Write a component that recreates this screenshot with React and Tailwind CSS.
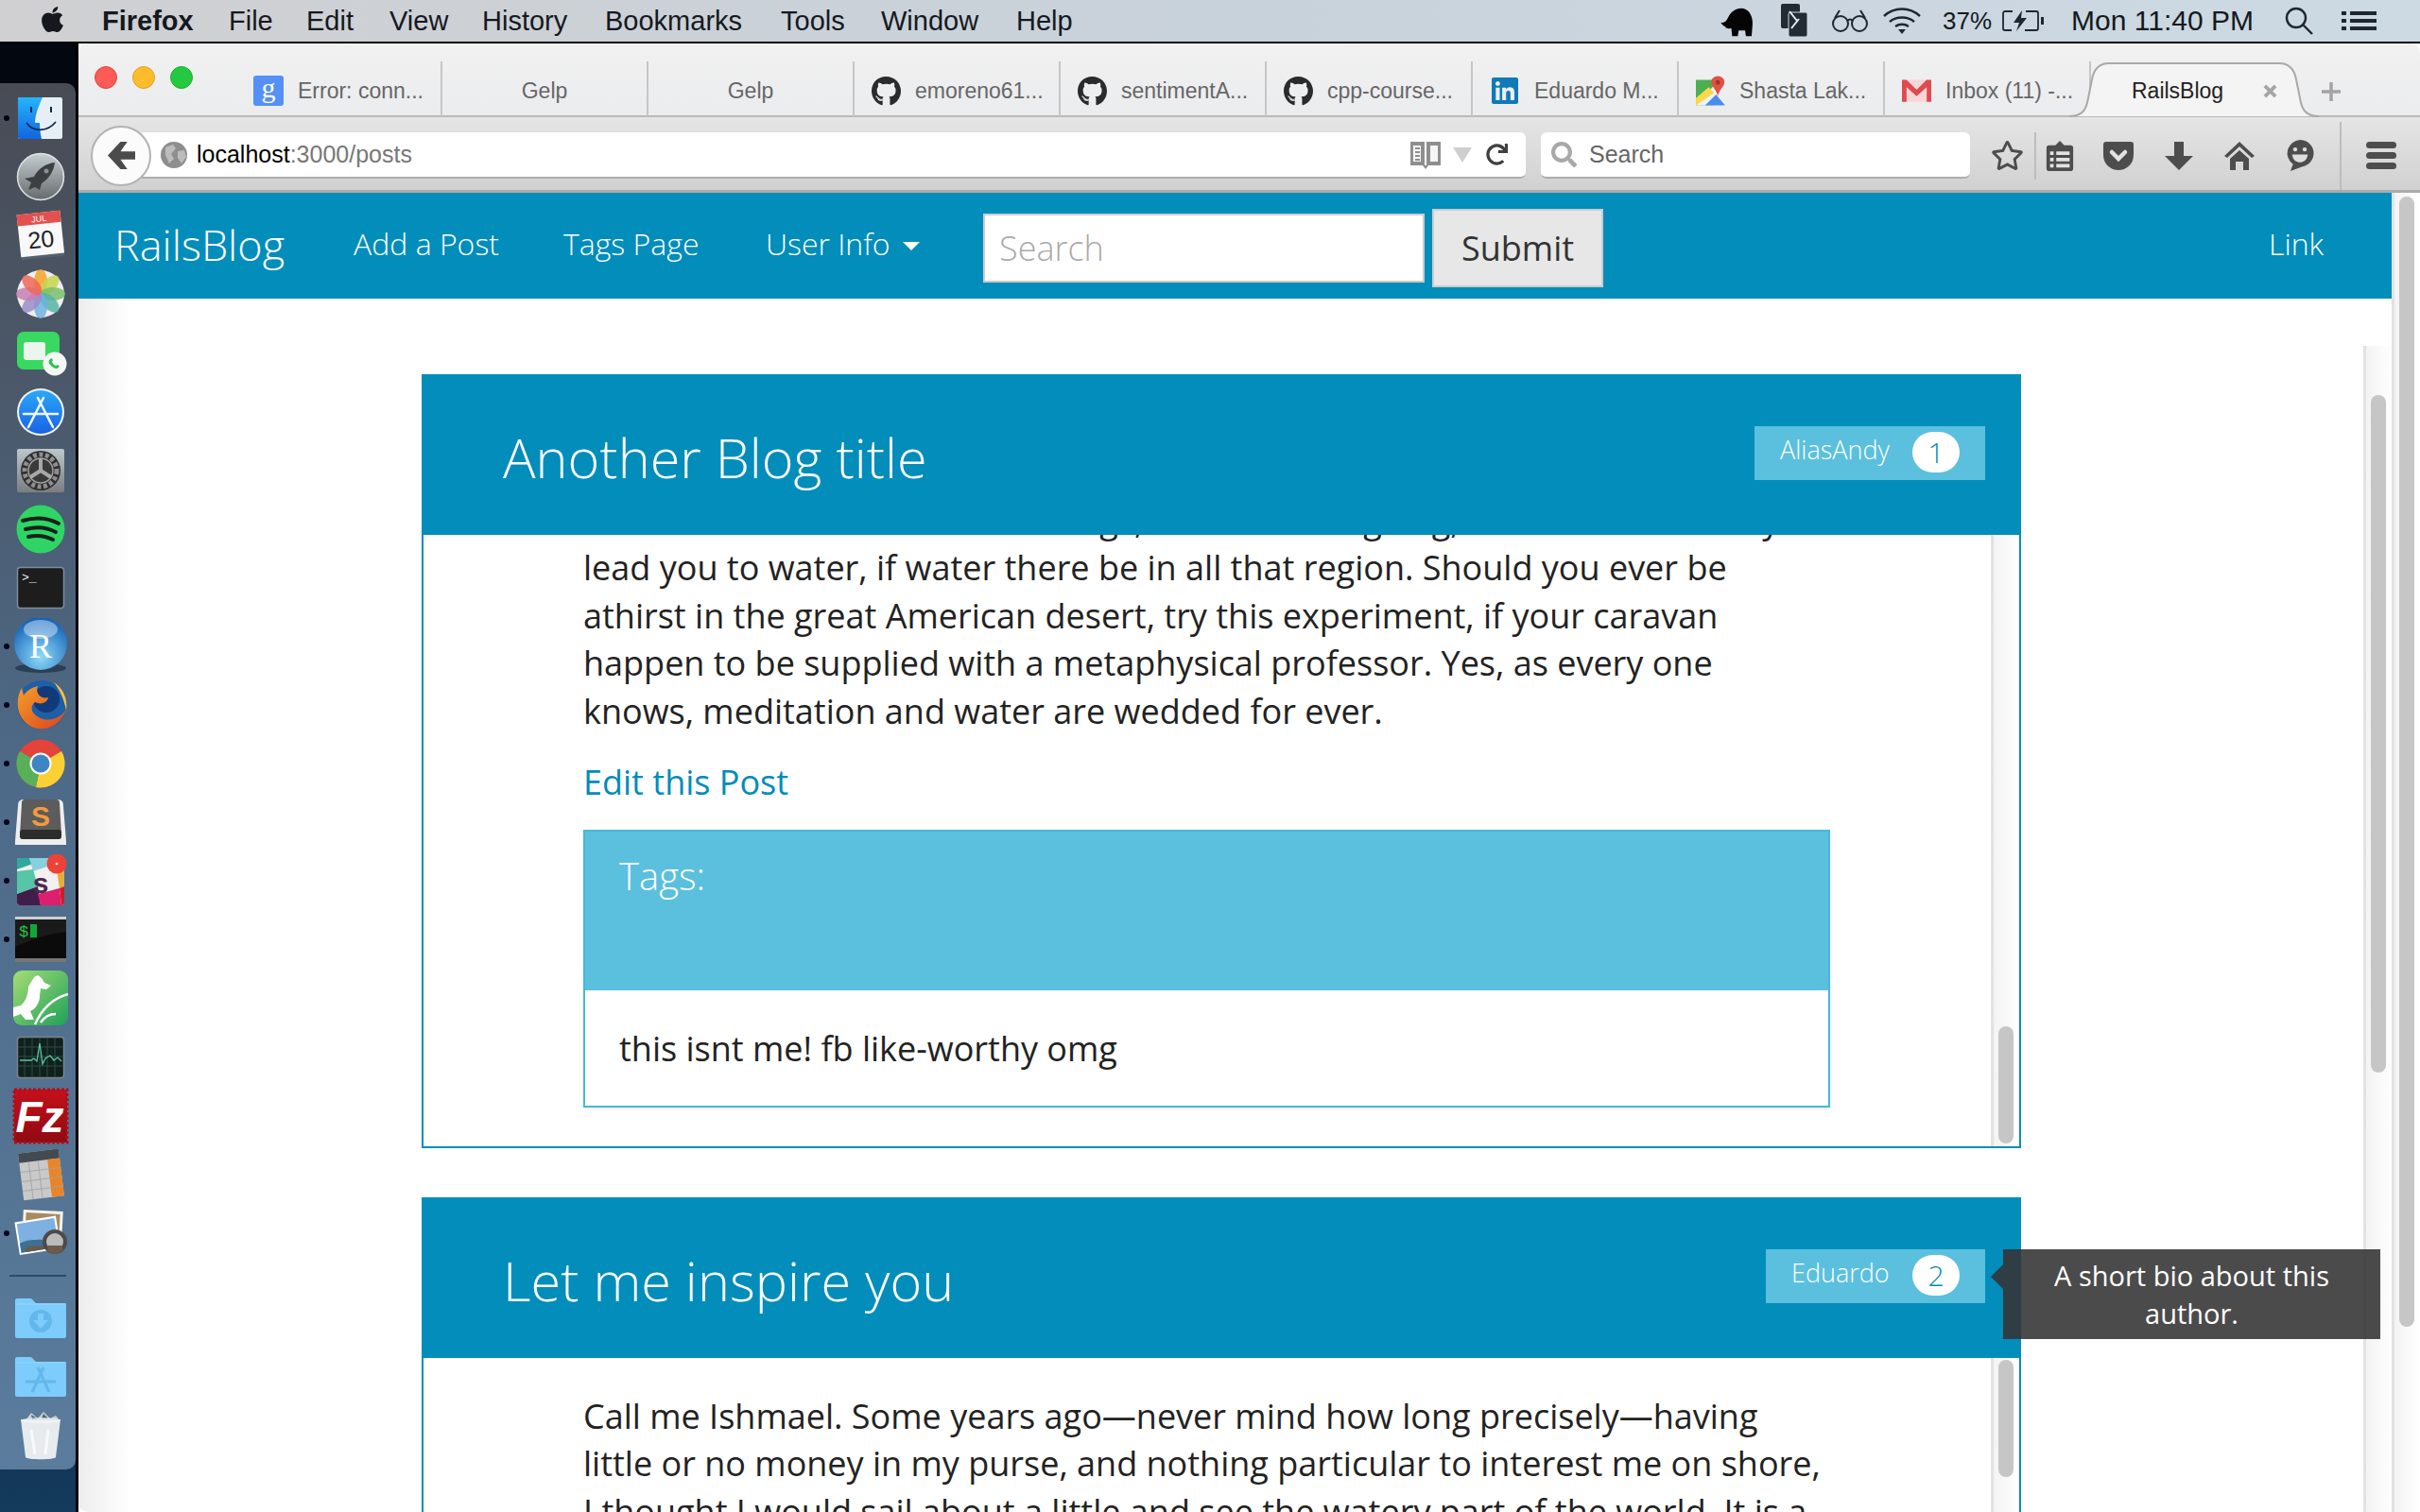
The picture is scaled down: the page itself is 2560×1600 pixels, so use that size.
import { FaApple, FaGithub, FaLinkedin, FaRedo, FaRegStar, FaSearch } from 'react-icons/fa'

const sans = "font-['Liberation_Sans',Arial,sans-serif]"

// ---- dock icons, all on a 60x60 box ----
const Finder = () => (
  <svg viewBox="0 0 60 60" className="w-[60px] h-[60px]">
    <defs>
      <linearGradient id="fin" x1="0" y1="0" x2="0" y2="1"><stop offset="0" stopColor="#25b5fb" /><stop offset="1" stopColor="#1265e0" /></linearGradient>
    </defs>
    <rect x="6" y="8" width="47" height="44" rx="2" fill="#e6eff6" />
    <path d="M8 8H32C27 19 24 28 24 35H29C29 42 30 48 31 52H8a2 2 0 0 1-2-2V10a2 2 0 0 1 2-2z" fill="url(#fin)" />
    <rect x="19" y="18" width="2" height="6" fill="#10294a" />
    <rect x="40" y="18" width="2" height="6" fill="#10294a" />
    <path d="M15 35C22 45 37 45 46 34" fill="none" stroke="#10294a" strokeWidth="1.8" />
  </svg>
)

const Launchpad = () => (
  <svg viewBox="0 0 60 60" className="w-[60px] h-[60px]">
    <defs>
      <linearGradient id="lau" x1="0" y1="0" x2="0" y2="1"><stop offset="0" stopColor="#c5ced2" /><stop offset="1" stopColor="#666a6d" /></linearGradient>
    </defs>
    <circle cx="30" cy="30" r="24.5" fill="url(#lau)" stroke="#dfe3e5" strokeWidth="1.5" />
    <path d="M45 15C35 16 27 22 23 30L13 32L20 36L17 44L24 41L29 44L31 37C39 32 44 24 45 15z" fill="#3c4043" />
    <circle cx="36" cy="24" r="2.5" fill="#8b9093" />
  </svg>
)

const Calendar = () => (
  <svg viewBox="0 0 60 60" className="w-[60px] h-[60px]">
    <g transform="rotate(-6 30 30)">
      <rect x="7" y="9" width="46" height="45" fill="#56606a" />
      <rect x="7" y="6" width="46" height="45" fill="#f8f8f8" />
      <rect x="7" y="6" width="46" height="12" fill="#e4504e" />
      <text x="30" y="15.5" textAnchor="middle" fontSize="9" fill="#fff" fontFamily="Liberation Sans">JUL</text>
      <text x="30" y="43" textAnchor="middle" fontSize="25" fill="#222" fontFamily="Liberation Sans">20</text>
    </g>
  </svg>
)

const Photos = () => {
  const colors = ['#f5a32a', '#c6d64c', '#79bf6a', '#58b3a8', '#6fb2e2', '#9a8cc9', '#c77fb3', '#ee675a']
  return (
    <svg viewBox="0 0 60 60" className="w-[60px] h-[60px]">
      <circle cx="30" cy="30" r="25" fill="#eeeeee" />
      {colors.map((c, i) => (
        <ellipse key={c} cx="30" cy="17" rx="7" ry="13" fill={c} fillOpacity="0.85" transform={`rotate(${i * 45} 30 30)`} />
      ))}
    </svg>
  )
}

const FaceTime = () => (
  <svg viewBox="0 0 60 60" className="w-[60px] h-[60px]">
    <rect x="5" y="8" width="45" height="40" rx="7" fill="#39d861" />
    <rect x="12" y="19" width="23" height="19" rx="3" fill="#eaf6ec" />
    <circle cx="45" cy="42" r="12.5" fill="#f4f7f4" />
    <path d="M40 37c1-1 2-1 3 1l-1 2c1 2 2 3 4 4l2-1c2 1 2 2 1 3-2 2-5 1-8-2s-3-5-1-7z" fill="#2fc257" />
  </svg>
)

const AppStore = () => (
  <svg viewBox="0 0 60 60" className="w-[60px] h-[60px]">
    <defs>
      <linearGradient id="aps" x1="0" y1="0" x2="0" y2="1"><stop offset="0" stopColor="#2aa8fb" /><stop offset="1" stopColor="#1a62e4" /></linearGradient>
    </defs>
    <circle cx="30" cy="30" r="25" fill="#f2f5f8" />
    <circle cx="30" cy="30" r="23" fill="url(#aps)" />
    <path d="M33 15L17 46M27 15L43 46M12 32H48" fill="none" stroke="#eef5fd" strokeWidth="2.6" strokeLinecap="round" />
  </svg>
)

const SysPrefs = () => (
  <svg viewBox="0 0 60 60" className="w-[60px] h-[60px]">
    <defs>
      <linearGradient id="sys" x1="0" y1="0" x2="0" y2="1"><stop offset="0" stopColor="#bcc7ca" /><stop offset="1" stopColor="#7a7e80" /></linearGradient>
    </defs>
    <rect x="5" y="7" width="50" height="46" rx="2" fill="url(#sys)" />
    <circle cx="30" cy="30" r="21" fill="#2e2e2e" />
    <circle cx="30" cy="30" r="17" fill="none" stroke="#8e8e8e" strokeWidth="5" strokeDasharray="4 2.5" />
    <circle cx="30" cy="30" r="13" fill="#3a3a3a" stroke="#a2a2a2" strokeWidth="1.5" />
    <path d="M30 30V17M30 30L19 37M30 30L41 37" stroke="#a8a8a8" strokeWidth="4" />
  </svg>
)

const Spotify = () => (
  <svg viewBox="0 0 60 60" className="w-[60px] h-[60px]">
    <circle cx="30" cy="30" r="25.5" fill="#2ed565" />
    <path d="M11 21C24 17 38 18 49 24M14 30C25 27 37 28 46 33M17 38C26 36 35 37 43 41" fill="none" stroke="#16221b" strokeWidth="4" strokeLinecap="round" />
  </svg>
)

const Terminal = () => (
  <svg viewBox="0 0 60 60" className="w-[60px] h-[60px]">
    <rect x="5.5" y="8.5" width="49" height="43" rx="3" fill="#1d1d1d" stroke="#7e8c99" strokeWidth="1.5" />
    <text x="10" y="23" fontSize="13" fill="#eee" fontFamily="Liberation Mono">&gt;_</text>
  </svg>
)

const RLang = () => (
  <svg viewBox="0 0 60 60" className="w-[60px] h-[60px]">
    <defs>
      <radialGradient id="rl" cx="0.5" cy="0.75" r="0.75"><stop offset="0" stopColor="#8fdcf7" /><stop offset="1" stopColor="#0f5fb8" /></radialGradient>
    </defs>
    <ellipse cx="30" cy="53" rx="27" ry="5" fill="#2a3f55" />
    <circle cx="30" cy="27" r="28" fill="url(#rl)" />
    <ellipse cx="30" cy="12" rx="18" ry="10" fill="#fff" fillOpacity="0.4" />
    <text x="30" y="42" textAnchor="middle" fontSize="36" fill="#fff" fontFamily="Liberation Serif">R</text>
  </svg>
)

const Firefox = () => (
  <svg viewBox="0 0 60 60" className="w-[60px] h-[60px]">
    <defs>
      <linearGradient id="ffx" x1="0" y1="0" x2="1" y2="1"><stop offset="0" stopColor="#f6a02a" /><stop offset="1" stopColor="#d9421c" /></linearGradient>
    </defs>
    <circle cx="31" cy="30" r="26" fill="#1d5fa8" />
    <circle cx="36" cy="24" r="14" fill="#123a7a" />
    <path d="M10 12C3 24 3 43 20 53C34 60 52 52 57 34C52 44 40 48 30 44C20 40 18 32 24 27C30 30 37 28 38 22C30 24 24 18 27 10C18 12 14 17 12 20z" fill="url(#ffx)" />
    <path d="M44 6C53 12 59 22 57 36C55 24 50 14 44 6z" fill="#f6c243" />
  </svg>
)

const Chrome = () => (
  <svg viewBox="0 0 60 60" className="w-[60px] h-[60px]">
    <circle cx="30" cy="30" r="25.5" fill="#e2433b" />
    <path d="M30 30L52 43A25.5 25.5 0 0 1 25 55z" fill="#fbd035" />
    <path d="M30 30L52 17A25.5 25.5 0 0 1 52 43L30 43z" fill="#fbd035" />
    <path d="M8 17L30 30L25 55A25.5 25.5 0 0 1 8 17z" fill="#58b159" />
    <circle cx="30" cy="30" r="11.5" fill="#fff" />
    <circle cx="30" cy="30" r="9.5" fill="#3f85c4" />
  </svg>
)

const Sublime = () => (
  <svg viewBox="0 0 60 60" className="w-[60px] h-[60px]">
    <path d="M3 50L6 13C6 8 8 6 12 6H48C52 6 54 8 54 13L57 50V54H3z" fill="#eeeeee" />
    <path d="M8 44L10 10C10 7 11 6 14 6H46C49 6 50 7 50 10L52 44C52 47 50 48 48 48H12C10 48 8 47 8 44z" fill="#5c5c5c" />
    <rect x="8" y="38" width="44" height="10" rx="3" fill="#2c2c2c" />
    <text x="30" y="34" textAnchor="middle" fontSize="30" fontWeight="700" fill="#f59a3c" fontFamily="Liberation Sans">S</text>
  </svg>
)

const Slack = () => (
  <svg viewBox="0 0 60 60" className="w-[60px] h-[60px]">
    <rect x="5" y="6" width="50" height="50" rx="3" fill="#f4f1ee" />
    <path d="M5 18L22 12L18 6H8a3 3 0 0 0-3 3z" fill="#2fa99b" />
    <path d="M18 6L22 20L46 12L44 6z" fill="#87d0e0" />
    <path d="M5 20L22 18L27 36L5 44z" fill="#56c5a8" />
    <path d="M46 12L55 10V36L50 38z" fill="#e6ad3e" />
    <path d="M5 44L27 36L30 56H8a3 3 0 0 1-3-3z" fill="#411d4a" />
    <path d="M30 56L27 44L50 38L52 56z" fill="#dd1f6d" />
    <path d="M50 38L55 36V53a3 3 0 0 1-3 3z" fill="#d31a2a" />
    <text x="30" y="43" textAnchor="middle" fontSize="30" fontWeight="700" fill="#4e2a52" fontFamily="Liberation Sans">s</text>
    <circle cx="47" cy="12" r="10.5" fill="#ef4136" />
    <circle cx="47" cy="12" r="1.3" fill="#fff" />
  </svg>
)

const ITerm = () => (
  <svg viewBox="0 0 60 60" className="w-[60px] h-[60px]">
    <rect x="3" y="6" width="54" height="48" fill="#1a1a1a" />
    <rect x="3" y="6" width="54" height="3" fill="#cfcfcf" />
    <rect x="3" y="50" width="54" height="4" fill="#777" />
    <path d="M3 38C20 30 40 24 57 22V50H3z" fill="#0b0b0b" />
    <text x="7" y="27" fontSize="17" fill="#1fcb45" fontFamily="Liberation Mono">$</text>
    <rect x="19" y="14" width="7" height="14" fill="#12a838" />
  </svg>
)

const Dragon = () => (
  <svg viewBox="0 0 60 60" className="w-[60px] h-[60px]">
    <defs>
      <linearGradient id="drg" x1="0" y1="0" x2="1" y2="1"><stop offset="0" stopColor="#a5dd75" /><stop offset="1" stopColor="#1fa159" /></linearGradient>
    </defs>
    <rect x="1" y="1" width="58" height="58" rx="9" fill="url(#drg)" />
    <path d="M23 8L27 6L31 9L34 14L41 17L36 21L30 20L29 28C29 36 24 42 19 44L23 53H14L9 47L1 50V40L9 38C14 34 17 26 17 18z" fill="#fff" />
    <path d="M59 26C44 30 32 40 24 58M30 56C34 50 40 47 46 47" fill="none" stroke="#fff" strokeWidth="2.5" />
  </svg>
)

const Activity = () => (
  <svg viewBox="0 0 60 60" className="w-[60px] h-[60px]">
    <rect x="5.5" y="8.5" width="49" height="43" rx="3" fill="#10201c" stroke="#78858c" strokeWidth="1.5" />
    <path d="M13 9V51M21 9V51M29 9V51M37 9V51M45 9V51M6 19H54M6 29H54M6 39H54" stroke="#2f4d44" strokeWidth="1" />
    <path d="M8 33H20L23 31L26 34L29 15L32 37L35 31L40 28L44 33L48 30L52 34" fill="none" stroke="#58c7a0" strokeWidth="1.3" />
  </svg>
)

const FileZilla = () => (
  <svg viewBox="0 0 60 60" className="w-[60px] h-[60px]">
    <defs>
      <linearGradient id="fz" x1="0" y1="0" x2="0" y2="1"><stop offset="0" stopColor="#c4101c" /><stop offset="1" stopColor="#8f0a12" /></linearGradient>
    </defs>
    <rect x="2" y="2" width="56" height="56" fill="url(#fz)" stroke="#b30d18" strokeWidth="3" strokeDasharray="3 2" />
    <text x="29" y="47" textAnchor="middle" fontSize="46" fontWeight="700" fontStyle="italic" fill="#fff" fontFamily="Liberation Sans">Fz</text>
  </svg>
)

const Calculator = () => (
  <svg viewBox="0 0 60 60" className="w-[60px] h-[60px]">
    <g transform="rotate(-7 30 30)">
      <rect x="9" y="5" width="43" height="50" fill="#c9c9c9" />
      <rect x="9" y="5" width="43" height="10" fill="#444b50" />
      <rect x="39" y="15" width="13" height="40" fill="#ea8428" />
      <path d="M9 25H52M9 35H52M9 45H52M19 15V55M29 15V55" stroke="#a2a2a2" strokeWidth="0.8" />
    </g>
  </svg>
)

const Preview = () => (
  <svg viewBox="0 0 60 60" className="w-[60px] h-[60px]">
    <rect x="11" y="6" width="42" height="30" fill="#f6f3ea" transform="rotate(3 32 21)" />
    <rect x="14" y="9" width="36" height="24" fill="#a88b60" transform="rotate(3 32 21)" />
    <g transform="rotate(-9 26 33)">
      <rect x="5" y="15" width="44" height="35" fill="#fff" />
      <rect x="7" y="17" width="40" height="31" fill="#7eb0e2" />
      <path d="M7 38C20 32 34 42 47 36V48H7z" fill="#3f6f93" />
      <path d="M12 44C20 40 28 46 36 44V48H12z" fill="#6a5a4a" />
    </g>
    <circle cx="45" cy="39" r="11" fill="#b8bcbc" stroke="#4d4a47" strokeWidth="4" />
    <path d="M37 48C40 53 50 53 54 47L52 43H38z" fill="#6f5b4b" />
  </svg>
)

const Folder = ({ kind }) => (
  <svg viewBox="0 0 60 60" className="w-[60px] h-[60px]">
    <path d="M3 11a2 2 0 0 1 2-2H20L25 14H55a2 2 0 0 1 2 2V49a2 2 0 0 1-2 2H5a2 2 0 0 1-2-2z" fill="#7dccfb" />
    <path d="M3 15H57" stroke="#94d8fd" strokeWidth="1" />
    {kind === 'down' ? (
      <>
        <circle cx="30" cy="33" r="12" fill="#64b7ea" />
        <path d="M27 25H33V32H38L30 41L22 32H27z" fill="#7dccfb" />
      </>
    ) : (
      <path d="M33 20L21 46M27 20L39 46M14 35H46" fill="none" stroke="#64b7ea" strokeWidth="3" />
    )}
  </svg>
)

const Trash = () => (
  <svg viewBox="0 0 60 60" className="w-[60px] h-[60px]">
    <path d="M9 13H51L46 53C45 56 15 56 14 53z" fill="#e7ebee" />
    <path d="M14 14L20 6L27 12L33 5L40 12L46 9L50 14z" fill="#c7d0d6" />
    <path d="M20 8L26 12L21 13zM33 7L38 12H31z" fill="#4d6a80" />
    <ellipse cx="30" cy="14" rx="21" ry="3" fill="#f6f7f8" fillOpacity="0.6" />
    <path d="M20 24L24 50M38 24L35 50" stroke="#fff" strokeWidth="3" strokeOpacity="0.7" />
  </svg>
)

const dockApps = [
  { name: 'finder', Icon: Finder, dot: true },
  { name: 'launchpad', Icon: Launchpad },
  { name: 'calendar', Icon: Calendar },
  { name: 'photos', Icon: Photos },
  { name: 'facetime', Icon: FaceTime },
  { name: 'appstore', Icon: AppStore },
  { name: 'prefs', Icon: SysPrefs },
  { name: 'spotify', Icon: Spotify },
  { name: 'terminal', Icon: Terminal },
  { name: 'r', Icon: RLang, dot: true },
  { name: 'firefox', Icon: Firefox, dot: true },
  { name: 'chrome', Icon: Chrome, dot: true },
  { name: 'sublime', Icon: Sublime, dot: true },
  { name: 'slack', Icon: Slack, dot: true },
  { name: 'iterm', Icon: ITerm, dot: true },
  { name: 'dragon', Icon: Dragon },
  { name: 'activity', Icon: Activity },
  { name: 'filezilla', Icon: FileZilla },
  { name: 'calc', Icon: Calculator },
  { name: 'preview', Icon: Preview, dot: true },
]

const DockRow = ({ dot, children }) => (
  <div className="flex items-center h-[62.1px] shrink-0 pl-1">
    <span className={`w-[6px] h-[6px] rounded-full mr-[3px] ${dot ? 'bg-[#02051a]' : ''}`} />
    {children}
  </div>
)

const Dock = () => (
  <div className="w-[83px] shrink-0 border-r-[3px] border-black bg-gradient-to-b from-[#03070f] via-[#07182b] to-[#143a5c] pt-[42px] pb-[45px] flex">
    <div className="w-[80px] rounded-r-[10px] bg-gradient-to-b from-[#484b54] via-[#4d6a88] to-[#5b7c9d] pt-[6px] flex flex-col">
      {dockApps.map(({ name, Icon, dot }) => (
        <DockRow key={name} dot={dot}><Icon /></DockRow>
      ))}
      <div className="h-[28px] shrink-0 flex items-center pl-[10px]">
        <div className="w-[60px] h-[2px] bg-[#2f4a68]" />
      </div>
      <DockRow><Folder kind="down" /></DockRow>
      <DockRow><Folder kind="apps" /></DockRow>
      <DockRow><Trash /></DockRow>
    </div>
  </div>
)

// ---- mac menu bar ----
const Elephant = () => (
  <svg viewBox="0 0 42 42" className="w-[41px] h-[36px]">
    <path d="M1 23C5 24 8 22 10 17C14 8 24 3 32 7C39 11 41 20 40 28L39 40H32L31 33H23L22 40H15L14 30C11 31 8 31 6 28C4 27 2 25 1 23z" fill="#050505" />
  </svg>
)

const Mirror = () => (
  <svg viewBox="0 0 30 40" className="w-[30px] h-[40px]">
    <rect x="1" y="2" width="20" height="26" rx="2" fill="#222b33" />
    <rect x="9" y="11" width="20" height="26" rx="2" fill="#222b33" stroke="#cdd8e2" strokeWidth="1" />
    <path d="M10 10L18 20M20 18L12 28" stroke="#e5edf3" strokeWidth="2" />
  </svg>
)

const Glasses = () => (
  <svg viewBox="0 0 38 26" className="w-[38px] h-[26px]" fill="none" stroke="#1e2730" strokeWidth="2">
    <circle cx="9" cy="16" r="8" />
    <circle cx="29" cy="16" r="8" />
    <path d="M16 13C18 11 20 11 22 13M3 10L8 2M35 10L30 2" />
  </svg>
)

const Wifi = () => (
  <svg viewBox="0 0 42 30" className="w-[42px] h-[30px]" fill="none" stroke="#1e2730" strokeWidth="2.4">
    <path d="M2 10C13 0 29 0 40 10M8 16C15 10 27 10 34 16M14 21C18 18 24 18 28 21" />
    <path d="M17 24H25L21 29z" fill="#1e2730" stroke="none" />
  </svg>
)

const Battery = () => (
  <svg viewBox="0 0 46 24" className="w-[46px] h-[24px]" fill="none" stroke="#1e2730" strokeWidth="1.8">
    <path d="M11 2H3a2 2 0 0 0-2 2V20a2 2 0 0 0 2 2H10M25 2H36a2 2 0 0 1 2 2V20a2 2 0 0 1-2 2H24" />
    <path d="M21 1L12 14H18L15 23L26 9H20z" fill="#1e2730" stroke="none" />
    <rect x="41" y="8" width="3" height="8" fill="#1e2730" stroke="none" />
  </svg>
)

const MenuList = () => (
  <svg viewBox="0 0 37 22" className="w-[37px] h-[22px]" fill="#1e2730">
    <rect y="1" width="5" height="4" />
    <rect x="9" y="1" width="28" height="4" />
    <rect y="9" width="5" height="4" />
    <rect x="9" y="9" width="28" height="4" />
    <rect y="17" width="5" height="4" />
    <rect x="9" y="17" width="28" height="4" />
  </svg>
)

const MenuSearch = () => (
  <svg viewBox="0 0 30 30" className="w-[30px] h-[30px] ml-[33px]" fill="none" stroke="#1e2730" strokeWidth="2.4">
    <circle cx="12" cy="12" r="10" />
    <path d="M19 19L29 29" />
  </svg>
)

const MenuBar = () => (
  <div className={`${sans} h-[46px] shrink-0 border-b-2 border-black bg-gradient-to-r from-[#d0d0d2] via-[#c8d2db] to-[#cdd9e3] flex items-center text-[29px] leading-none text-[#15191e] pl-[41px] pr-[46px]`}>
    <FaApple className="w-[29px] h-[31px] text-[#15191e] mr-[38px] -mt-1" />
    <div className="flex items-center">
      <span className="w-[134px] font-bold">Firefox</span>
      <span className="w-[82px]">File</span>
      <span className="w-[88px]">Edit</span>
      <span className="w-[98px]">View</span>
      <span className="w-[130px]">History</span>
      <span className="w-[186px]">Bookmarks</span>
      <span className="w-[106px]">Tools</span>
      <span className="w-[143px]">Window</span>
      <span>Help</span>
    </div>
    <div className="ml-auto flex items-center">
      <Elephant />
      <span className="ml-[25px]"><Mirror /></span>
      <span className="ml-[25px]"><Glasses /></span>
      <span className="ml-[15px]"><Wifi /></span>
      <span className="ml-[22px] text-[26px]">37%</span>
      <span className="ml-[11px]"><Battery /></span>
      <span className="ml-[27px] text-[30px]">Mon 11:40 PM</span>
      <MenuSearch />
      <span className="ml-[30px]"><MenuList /></span>
    </div>
  </div>
)

// ---- firefox tab strip ----
const GoogleTile = () => (
  <div className="w-[32px] h-[32px] rounded-[3px] bg-[#5490f6] flex items-center justify-center text-white text-[30px] leading-none pb-[6px] font-['Liberation_Serif',serif]">g</div>
)

const MapsIcon = () => (
  <svg viewBox="0 0 32 32" className="w-[31px] h-[32px]">
    <path d="M0 4H20V32H0z" fill="#4caf50" />
    <path d="M0 32L20 10L32 32z" fill="#f3f3f3" />
    <path d="M0 32V24L14 12L20 18z" fill="#fbd74a" />
    <path d="M10 32L22 20L32 32z" fill="#4a8cf0" />
    <path d="M24 0C19 0 16 4 17 8C18 12 23 16 24 22C25 16 30 12 31 8C32 4 29 0 24 0z" fill="#df5246" />
    <circle cx="24" cy="7" r="2.5" fill="#a6342a" />
  </svg>
)

const GmailIcon = () => (
  <svg viewBox="0 0 32 24" className="w-[31px] h-[24px]">
    <rect width="32" height="24" fill="#f7d6d6" />
    <path d="M0 0H5L16 11L27 0H32V24H27V8L16 18L5 8V24H0z" fill="#df4a4f" />
  </svg>
)

const tabs = [
  { title: 'Error: conn...', icon: <GoogleTile /> },
  { title: 'Gelp' },
  { title: 'Gelp' },
  { title: 'emoreno61...', icon: <FaGithub className="w-[31px] h-[33px] text-[#2b2b2b]" /> },
  { title: 'sentimentA...', icon: <FaGithub className="w-[31px] h-[33px] text-[#2b2b2b]" /> },
  { title: 'cpp-course...', icon: <FaGithub className="w-[31px] h-[33px] text-[#2b2b2b]" /> },
  { title: 'Eduardo M...', icon: <FaLinkedin className="w-[32px] h-[32px] text-[#0f7ab8]" /> },
  { title: 'Shasta Lak...', icon: <MapsIcon /> },
  { title: 'Inbox (11) -...', icon: <GmailIcon /> },
]

const TabStrip = () => (
  <div className={`${sans} h-[78px] shrink-0 border-b-2 border-[#b9b9b9] bg-gradient-to-b from-[#f1f1f1] to-[#ebecee] flex text-[23px] text-[#666]`}>
    <div className="flex items-center gap-4 pl-[17px] w-[167px] pb-[4px]">
      <span className="w-6 h-6 rounded-full bg-[#fc5b57] border border-[#e0443e]" />
      <span className="w-6 h-6 rounded-full bg-[#fdbc2c] border border-[#dea123]" />
      <span className="w-6 h-6 rounded-full bg-[#25c93f] border border-[#1fab35]" />
    </div>
    {tabs.map((t, i) => (
      <div key={i} className={`w-[218px] shrink-0 h-[58px] mt-[19px] pt-[4px] border-r-2 border-[#c6c6c6] flex items-center ${t.icon ? 'pl-[18px] gap-[15px]' : 'justify-center'}`}>
        {t.icon}
        <span className="whitespace-nowrap">{t.title}</span>
      </div>
    ))}
    <div className="relative w-[264px] shrink-0 -ml-[23px] mt-[20px] h-[58px] pt-[2px] flex items-center text-[#222] pl-[66px]">
      <svg viewBox="0 0 264 58" className="absolute inset-0 w-[264px] h-[58px]">
        <path d="M0 57C14 57 18 50 20 38L24 18C26 7 31 1 42 1H222C233 1 238 7 240 18L244 38C246 50 250 57 264 57" fill="#f4f4f5" stroke="#a9a9a9" strokeWidth="2" />
      </svg>
      <span className="relative whitespace-nowrap">RailsBlog</span>
      <svg viewBox="0 0 16 16" className="relative w-[15px] h-[15px] ml-[42px]" stroke="#a5a5a5" strokeWidth="4">
        <path d="M2 2L14 14M14 2L2 14" />
      </svg>
    </div>
    <svg viewBox="0 0 20 20" className="w-[20px] h-[20px] mt-[41px] ml-[3px]" stroke="#a3a3a3" strokeWidth="3.5">
      <path d="M10 0V20M0 10H20" />
    </svg>
  </div>
)

// ---- toolbar ----
const BackArrow = () => (
  <svg viewBox="0 0 28 28" className="w-[29px] h-[29px]" fill="#4b4b4b">
    <path d="M0 14L13 0H20L13 10H28V18H13L20 28H13z" />
  </svg>
)

const Globe = () => (
  <svg viewBox="0 0 28 28" className="w-[28px] h-[28px]">
    <circle cx="14" cy="14" r="14" fill="#8e8e8e" />
    <path d="M5 6L13 3L16 7L11 13L14 18L9 23L5 14zM18 10L25 9L27 16L22 23L18 17z" fill="#bcbcbc" />
  </svg>
)

const Reader = () => (
  <svg viewBox="0 0 32 30" className="w-[32px] h-[30px]">
    <path d="M0 1H15V26H0zM17 1H32V26H17z" fill="#8f8f8f" />
    <path d="M13 26H19L16 30z" fill="#8f8f8f" />
    <path d="M3 5H11V22H3zM21 5H29V22H21z" fill="#f5f5f5" />
    <path d="M5 8H10M5 12H10M5 16H10M5 20H10" stroke="#8f8f8f" strokeWidth="2" />
  </svg>
)

const ClipboardList = () => (
  <svg viewBox="0 0 30 34" className="w-[30px] h-[32px]" fill="#4d4d4d">
    <path d="M3 5H10L15 0L20 5H27a3 3 0 0 1 3 3V31a3 3 0 0 1-3 3H3a3 3 0 0 1-3-3V8a3 3 0 0 1 3-3z" />
    <path d="M4 12H8V16H4zM11 12H26V16H11zM4 19H8V23H4zM11 19H26V23H11zM4 26H8V30H4zM11 26H26V30H11z" fill="#e2e2e2" />
  </svg>
)

const PocketShield = () => (
  <svg viewBox="0 0 32 30" className="w-[32px] h-[30px]">
    <path d="M3 0H29a3 3 0 0 1 3 3V14C32 24 24 30 16 30C8 30 0 24 0 14V3a3 3 0 0 1 3-3z" fill="#4d4d4d" />
    <path d="M9 11L16 18L23 11" fill="none" stroke="#e2e2e2" strokeWidth="4.5" strokeLinecap="round" />
  </svg>
)

const DownArrow = () => (
  <svg viewBox="0 0 30 30" className="w-[30px] h-[30px]" fill="#4d4d4d">
    <path d="M10 0H20V15H30L15 30L0 15H10z" />
  </svg>
)

const HomeIcon = () => (
  <svg viewBox="0 0 32 30" className="w-[32px] h-[30px]" fill="#4d4d4d">
    <path d="M16 0L32 15L29 17L16 5L3 17L0 15z" />
    <path d="M16 9L26 18V30H20V21H12V30H6V18z" />
  </svg>
)

const ChatFace = () => (
  <svg viewBox="0 0 32 36" className="w-[32px] h-[33px]">
    <path d="M16 0a16 15.5 0 0 1 3 30.7L5 36L8 28A16 15.5 0 0 1 16 0z" fill="#4d4d4d" />
    <circle cx="10.5" cy="11" r="2.4" fill="#ddd" />
    <circle cx="21.5" cy="11" r="2.4" fill="#ddd" />
    <path d="M7 17H25C24 24 20 26 16 26C12 26 8 24 7 17z" fill="#ddd" />
  </svg>
)

const Toolbar = () => (
  <div className={`${sans} h-[80px] shrink-0 border-b-[3px] border-[#ababab] bg-gradient-to-b from-[#e5e5e5] to-[#d1d1d1] flex items-center text-[25px] pl-[13px] pt-[4px]`}>
    <div className="relative z-10 w-[64px] h-[64px] rounded-full bg-[#fbfbfb] border-2 border-[#b3b3b3] flex items-center justify-center shrink-0">
      <BackArrow />
    </div>
    <div className="-ml-[10px] pl-[20px] pr-[18px] w-[1464px] h-[49px] bg-white rounded-r-[6px] border-b-2 border-[#adadad] flex items-center shrink-0">
      <Globe />
      <span className="ml-[10px] text-black">localhost<span className="text-[#777]">:3000/posts</span></span>
      <span className="ml-auto"><Reader /></span>
      <span className="ml-[13px] w-0 h-0 border-x-[10px] border-x-transparent border-t-[16px] border-t-[#cfcfcf]" />
      <FaRedo className="ml-[15px] w-[23px] h-[23px] text-[#3f3f3f] mr-[1px]" />
    </div>
    <div className="ml-[16px] w-[454px] h-[49px] bg-white rounded-[6px] border-b-2 border-[#adadad] flex items-center pl-[11px] text-[#666] shrink-0">
      <FaSearch className="w-[27px] h-[27px] text-[#a8a8a8]" />
      <span className="ml-[13px]">Search</span>
    </div>
    <FaRegStar className="ml-[22px] w-[35px] h-[35px] text-[#4d4d4d] shrink-0" />
    <span className="ml-[11px] w-[2px] h-[50px] bg-[#bdbdbd] shrink-0" />
    <span className="ml-[10px] shrink-0"><ClipboardList /></span>
    <span className="ml-[31px] shrink-0"><PocketShield /></span>
    <span className="ml-[33px] shrink-0"><DownArrow /></span>
    <span className="ml-[33px] shrink-0"><HomeIcon /></span>
    <span className="ml-[32px] shrink-0"><ChatFace /></span>
    <span className="ml-[26px] w-[2px] h-[72px] bg-[#bdbdbd] shrink-0" />
    <div className="ml-[26px] flex flex-col gap-[4px] shrink-0">
      <span className="w-[32px] h-[7px] rounded-full bg-[#4d4d4d]" />
      <span className="w-[32px] h-[7px] rounded-full bg-[#4d4d4d]" />
      <span className="w-[32px] h-[7px] rounded-full bg-[#4d4d4d]" />
    </div>
  </div>
)

// ---- the rails page ----
const Scrollbar = ({ thumbClass, className }) => (
  <div className={`w-[30px] shrink-0 border-l-[3px] border-[#e2e2e2] bg-gradient-to-r from-[#f3f3f3] to-white pl-[5px] ${className}`}>
    <div className={`w-[16px] rounded-full bg-[#c6c6c6] ${thumbClass}`} />
  </div>
)

const AuthorBadge = ({ name, count, width }) => (
  <div className={`ml-auto mr-[38px] mt-[55px] h-[57px] bg-[#5bc0de] flex items-center justify-between pl-[27px] pr-[27px] ${width}`}>
    <span className="text-[27px] font-light text-white -mt-[6px]">{name}</span>
    <span className="w-[50px] h-[43px] rounded-full bg-white text-[#008cba] text-[30px] font-light flex items-center justify-center -mt-[2px]">{count}</span>
  </div>
)

const PostHeader = ({ title, children }) => (
  <div className="h-[170px] bg-[#028dbb] flex pl-[86px] shrink-0">
    <h2 className="text-[57.6px] font-light text-white leading-none mt-[59px] whitespace-nowrap">{title}</h2>
    {children}
  </div>
)

const Navbar = () => (
  <div className="h-[112px] shrink-0 bg-[#028dbb] flex items-center pl-[38px] pr-[72px] text-white font-light text-[32px] whitespace-nowrap">
    <a className="text-[45px] -mt-[3px] w-[186px]">RailsBlog</a>
    <a className="ml-[67px] -mt-[4px] w-[150px]">Add a Post</a>
    <a className="ml-[72px] -mt-[4px] w-[140px]">Tags Page</a>
    <a className="ml-[74px] -mt-[4px] flex items-center w-[157px]">
      User Info
      <span className="ml-[13px] mt-[5px] w-0 h-0 border-x-[9px] border-x-transparent border-t-[9px] border-t-white" />
    </a>
    <input
      placeholder="Search"
      className="ml-[73px] w-[467px] h-[73px] mt-[5px] bg-white border-2 border-[#ccc] px-[15px] text-[36px] font-light text-[#333] placeholder:text-[#aaa] outline-none"
    />
    <button className="ml-[8px] w-[181px] h-[83px] mt-[5px] bg-[#e7e7e7] border-2 border-[#ccc] text-[36px] font-normal text-[#333]">Submit</button>
    <a className="ml-auto -mt-[4px]">Link</a>
  </div>
)

const App = () => (
  <div className="w-[2560px] h-[1600px] overflow-hidden flex flex-col font-['Open_Sans',sans-serif]">
    <MenuBar />
    <div className="flex flex-1 min-h-0">
      <Dock />
      <div className="flex-1 min-w-0 flex flex-col overflow-hidden rounded-t-[10px] rounded-bl-[10px] bg-white">
        <TabStrip />
        <Toolbar />
        <div className="flex flex-1 min-h-0">
          <div className="flex-1 min-w-0 flex flex-col">
            <Navbar />
            <div className="flex-1 min-h-0 flex pt-[50px] bg-[linear-gradient(to_right,#ededed,#ffffff_55px)]">
              {/* page column, tooltip is allowed to hang over the scrollbar */}
              <div className="flex-1 min-w-0 pt-[30px] pl-[363px]">
                <div className="w-[1692px] flex flex-col">
                  <PostHeader title="Another Blog title">
                    <AuthorBadge name="AliasAndy" count="1" width="w-[244px]" />
                  </PostHeader>
                  <div className="h-[649px] border-x-2 border-b-2 border-[#028dbb] flex overflow-hidden text-[36px] leading-[50.4px] text-[#222]">
                    <div className="flex-1 min-w-0 pl-[169px] -mt-[40px]">
                      {/* scrolled so that only the descenders of the first line show */}
                      <p className="w-[1319px] mb-[25px] indent-[141px] whitespace-nowrap">
                        stand that man on his legs, set his feet a-going, and he will infallibly<br />
                        lead you to water, if water there be in all that region. Should you ever be<br />
                        athirst in the great American desert, try this experiment, if your caravan<br />
                        happen to be supplied with a metaphysical professor. Yes, as every one<br />
                        knows, meditation and water are wedded for ever.
                      </p>
                      <a className="block text-[#008cba] mb-[25px]">Edit this Post</a>
                      <div className="w-[1319px] border-2 border-[#46b8da] shadow-[0_2px_3px_rgba(0,0,0,0.08)]">
                        <div className="h-[168px] bg-[#5bc0de] pl-[36px] pt-[22px] font-light text-white text-[40px]">Tags:</div>
                        <div className="h-[122px] pl-[36px] pt-[37px]">this isnt me! fb like-worthy omg</div>
                      </div>
                    </div>
                    <Scrollbar thumbClass="mt-[520px] h-[124px]" />
                  </div>
                  <div className="relative mt-[52px]">
                    <PostHeader title="Let me inspire you">
                      <AuthorBadge name="Eduardo" count="2" width="w-[232px]" />
                    </PostHeader>
                    <div className="absolute left-[1673px] top-[55px] w-[399px] h-[95px] bg-[rgba(53,53,53,0.89)] text-white text-[29px] leading-[40px] text-center pt-[8px] px-[30px]">
                      <span className="absolute -left-[13px] top-[16px] w-0 h-0 border-y-[13px] border-y-transparent border-r-[13px] border-r-[rgba(53,53,53,0.89)]" />
                      A short bio about this author.
                    </div>
                    <div className="h-[300px] border-x-2 border-[#028dbb] flex overflow-hidden text-[36px] leading-[50.4px] text-[#222]">
                      <div className="flex-1 min-w-0 pl-[169px] pt-[37px]">
                        <p className="w-[1319px]">
                          Call me Ishmael. Some years ago—never mind how long precisely—having little or no money in my purse, and nothing particular to interest me on shore, I thought I would sail about a little and see the watery part of the world. It is a way I have of driving off the spleen and regulating the circulation.
                        </p>
                      </div>
                      <Scrollbar thumbClass="mt-[2px] h-[124px]" />
                    </div>
                  </div>
                </div>
              </div>
              <Scrollbar thumbClass="mt-[52px] h-[717px]" />
            </div>
          </div>
          <Scrollbar thumbClass="mt-[4px] h-[1196px]" />
        </div>
      </div>
    </div>
  </div>
)

export default App
